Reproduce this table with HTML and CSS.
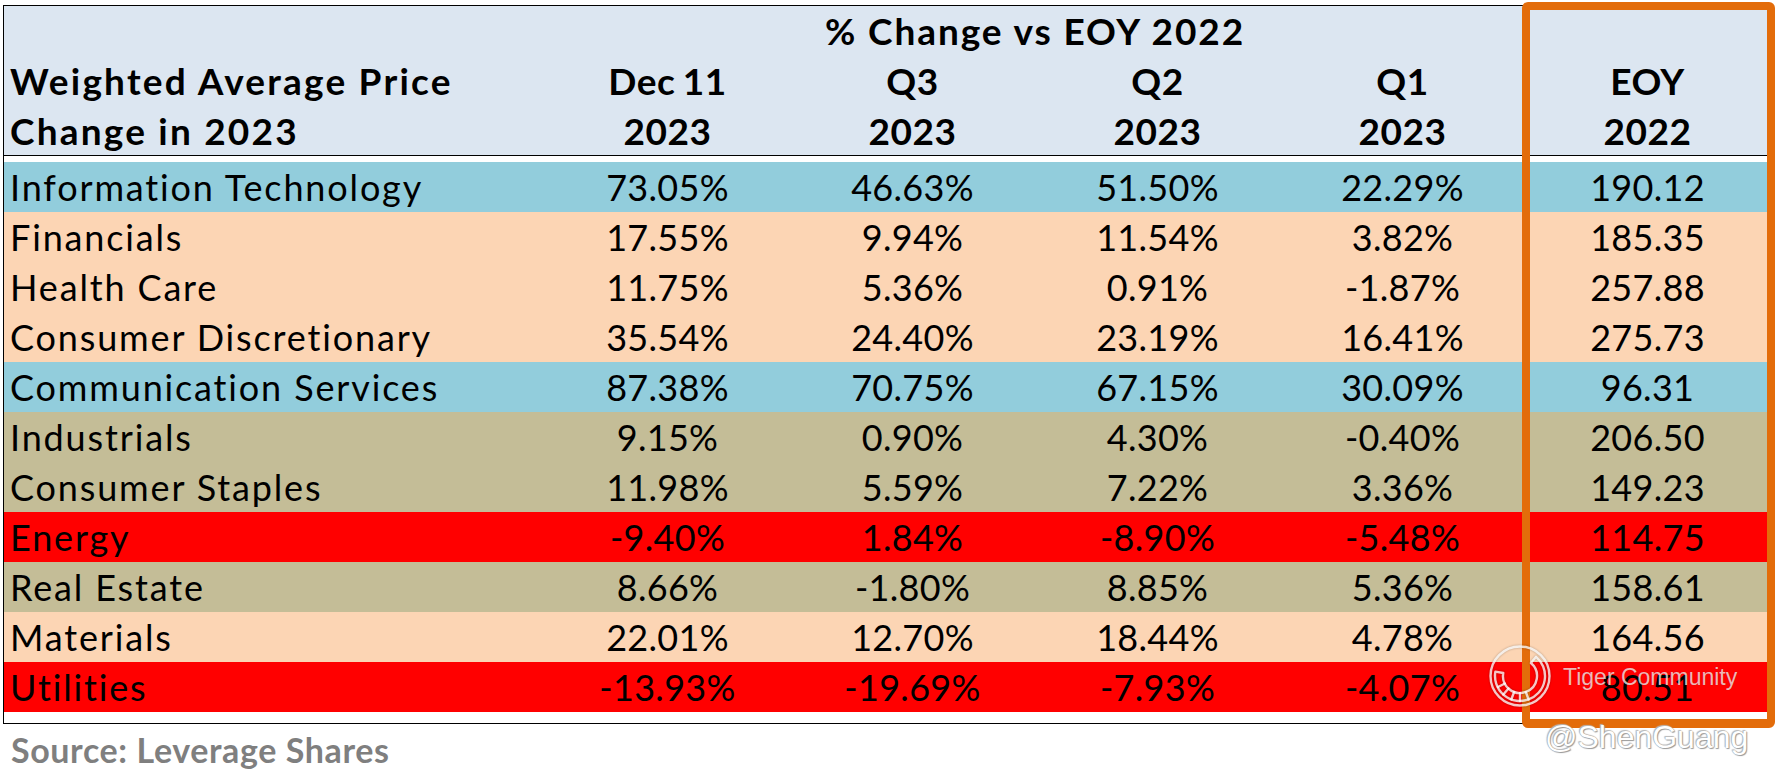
FILE: index.html
```html
<!DOCTYPE html>
<html lang="en">
<head>
<meta charset="utf-8">
<title>Weighted Average Price Change in 2023</title>
<link rel="stylesheet" href="styles.css">
</head>
<body>
<div class="page">
  <div class="sheet">
    <div class="head">
      <div class="hc"></div>
      <div class="hc title">% Change vs EOY 2022</div>
      <div class="hc"></div>
      <div class="hc label">Weighted Average Price</div>
      <div class="hc val">Dec 11</div>
      <div class="hc val">Q3</div>
      <div class="hc val">Q2</div>
      <div class="hc val">Q1</div>
      <div class="hc val">EOY</div>
      <div class="hc label">Change in 2023</div>
      <div class="hc val">2023</div>
      <div class="hc val">2023</div>
      <div class="hc val">2023</div>
      <div class="hc val">2023</div>
      <div class="hc val">2022</div>
    </div>
    <div class="rows">
      <div class="row blue"><div class="name">Information Technology</div><div class="num">73.05%</div><div class="num">46.63%</div><div class="num">51.50%</div><div class="num">22.29%</div><div class="num">190.12</div></div>
      <div class="row peach"><div class="name">Financials</div><div class="num">17.55%</div><div class="num">9.94%</div><div class="num">11.54%</div><div class="num">3.82%</div><div class="num">185.35</div></div>
      <div class="row peach"><div class="name">Health Care</div><div class="num">11.75%</div><div class="num">5.36%</div><div class="num">0.91%</div><div class="num">-1.87%</div><div class="num">257.88</div></div>
      <div class="row peach"><div class="name">Consumer Discretionary</div><div class="num">35.54%</div><div class="num">24.40%</div><div class="num">23.19%</div><div class="num">16.41%</div><div class="num">275.73</div></div>
      <div class="row blue"><div class="name">Communication Services</div><div class="num">87.38%</div><div class="num">70.75%</div><div class="num">67.15%</div><div class="num">30.09%</div><div class="num">96.31</div></div>
      <div class="row tan"><div class="name">Industrials</div><div class="num">9.15%</div><div class="num">0.90%</div><div class="num">4.30%</div><div class="num">-0.40%</div><div class="num">206.50</div></div>
      <div class="row tan"><div class="name">Consumer Staples</div><div class="num">11.98%</div><div class="num">5.59%</div><div class="num">7.22%</div><div class="num">3.36%</div><div class="num">149.23</div></div>
      <div class="row red"><div class="name">Energy</div><div class="num">-9.40%</div><div class="num">1.84%</div><div class="num">-8.90%</div><div class="num">-5.48%</div><div class="num">114.75</div></div>
      <div class="row tan"><div class="name">Real Estate</div><div class="num">8.66%</div><div class="num">-1.80%</div><div class="num">8.85%</div><div class="num">5.36%</div><div class="num">158.61</div></div>
      <div class="row peach"><div class="name">Materials</div><div class="num">22.01%</div><div class="num">12.70%</div><div class="num">18.44%</div><div class="num">4.78%</div><div class="num">164.56</div></div>
      <div class="row red"><div class="name">Utilities</div><div class="num">-13.93%</div><div class="num">-19.69%</div><div class="num">-7.93%</div><div class="num">-4.07%</div><div class="num">80.51</div></div>
    </div>
  </div>
  <div class="source">Source: Leverage Shares</div>

  <div class="highlight"></div>

  <svg class="tiger-logo" width="64" height="64" viewBox="0 0 64 64" aria-hidden="true">
    <g fill="none" stroke="rgba(255,255,255,0.78)" stroke-width="2.4" stroke-linejoin="round" stroke-linecap="round">
      <circle cx="32" cy="32" r="29.5"/>
      <path d="M48.07,12.85 A25,25 0 1 1 7.38,27.66 L15.26,29.05 A17,17 0 1 0 42.93,18.98 Z"/>
      <line x1="26.1" y1="48" x2="23.3" y2="55.5"/>
      <line x1="20.5" y1="44.5" x2="15.3" y2="50.5"/>
      <line x1="16.9" y1="39.5" x2="10" y2="43"/>
      <line x1="32" y1="49" x2="32" y2="57"/>
      <line x1="37.8" y1="48" x2="40.6" y2="55.5"/>
    </g>
  </svg>
  <div class="wm-text">Tiger Community</div>
  <div class="wm-user">@ShenGuang</div>
</div>
</body>
</html>
```
FILE: styles.css
```css
* { box-sizing: border-box; }

html, body {
  margin: 0;
  padding: 0;
  background: #ffffff;
}

body {
  font-family: Lato, "Noto Sans", sans-serif;
  color: #000000;
  width: 1778px;
  height: 777px;
  overflow: hidden;
}

.page {
  position: relative;
  padding: 5px 0 0 3px;
  width: 1778px;
  height: 777px;
}

.sheet {
  width: 1768px;
  border: 1px solid #000000;
}

.head {
  display: grid;
  grid-template-columns: 541px repeat(5, 245px);
  grid-template-rows: 50px 50px 49px;
  background: #dce6f1;
  border-bottom: 1px solid #000000;
  font-weight: 700;
  font-size: 37px;
}

.hc {
  line-height: 50px;
  text-align: center;
  white-space: nowrap;
  letter-spacing: 0.5px;
}

.hc.val {
  word-spacing: -2px;
}

.hc.title {
  grid-column: 2 / 6;
  letter-spacing: 1.9px;
}

.hc.label {
  text-align: left;
  padding-left: 6px;
  letter-spacing: 2.2px;
}

.rows {
  margin: 6px 0 11px 0;
}

.row {
  display: grid;
  grid-template-columns: 541px repeat(5, 245px);
  height: 50px;
  font-size: 36px;
  line-height: 50px;
  font-weight: 400;
}

.row .name {
  padding-left: 6px;
  letter-spacing: 1.85px;
  white-space: nowrap;
}

.row .num {
  text-align: center;
  letter-spacing: 0.3px;
  white-space: nowrap;
}

.blue  { background: #92cddc; }
.peach { background: #fcd5b4; }
.tan   { background: #c4bd97; }
.red   { background: #ff0000; }

.source {
  margin-top: 6px;
  padding-left: 8px;
  font-size: 34px;
  font-weight: 700;
  letter-spacing: 0.6px;
  line-height: 40px;
  color: #7f7f7f;
}

.highlight {
  position: absolute;
  left: 1522px;
  top: 2px;
  width: 253px;
  height: 726px;
  border: 8px solid #e36c0a;
  border-bottom-width: 9px;
  border-radius: 6px;
}

.tiger-logo {
  position: absolute;
  left: 1488px;
  top: 644px;
  filter: drop-shadow(0 0 1px rgba(0,0,0,0.35));
}

.wm-text {
  position: absolute;
  left: 1563px;
  top: 665px;
  font-family: "Liberation Sans", Arial, sans-serif;
  font-size: 23px;
  line-height: 24px;
  color: rgba(255,255,255,0.72);
  text-shadow: 0 0 1px rgba(0,0,0,0.25);
  white-space: nowrap;
}

.wm-user {
  position: absolute;
  left: 1545px;
  top: 719px;
  font-family: "Liberation Sans", Arial, sans-serif;
  font-size: 32px;
  line-height: 36px;
  color: #ffffff;
  text-shadow: 0 0 1px #8a8a8a, 1px 1px 1px #9a9a9a, -1px -1px 1px #bdbdbd;
  white-space: nowrap;
}
```
